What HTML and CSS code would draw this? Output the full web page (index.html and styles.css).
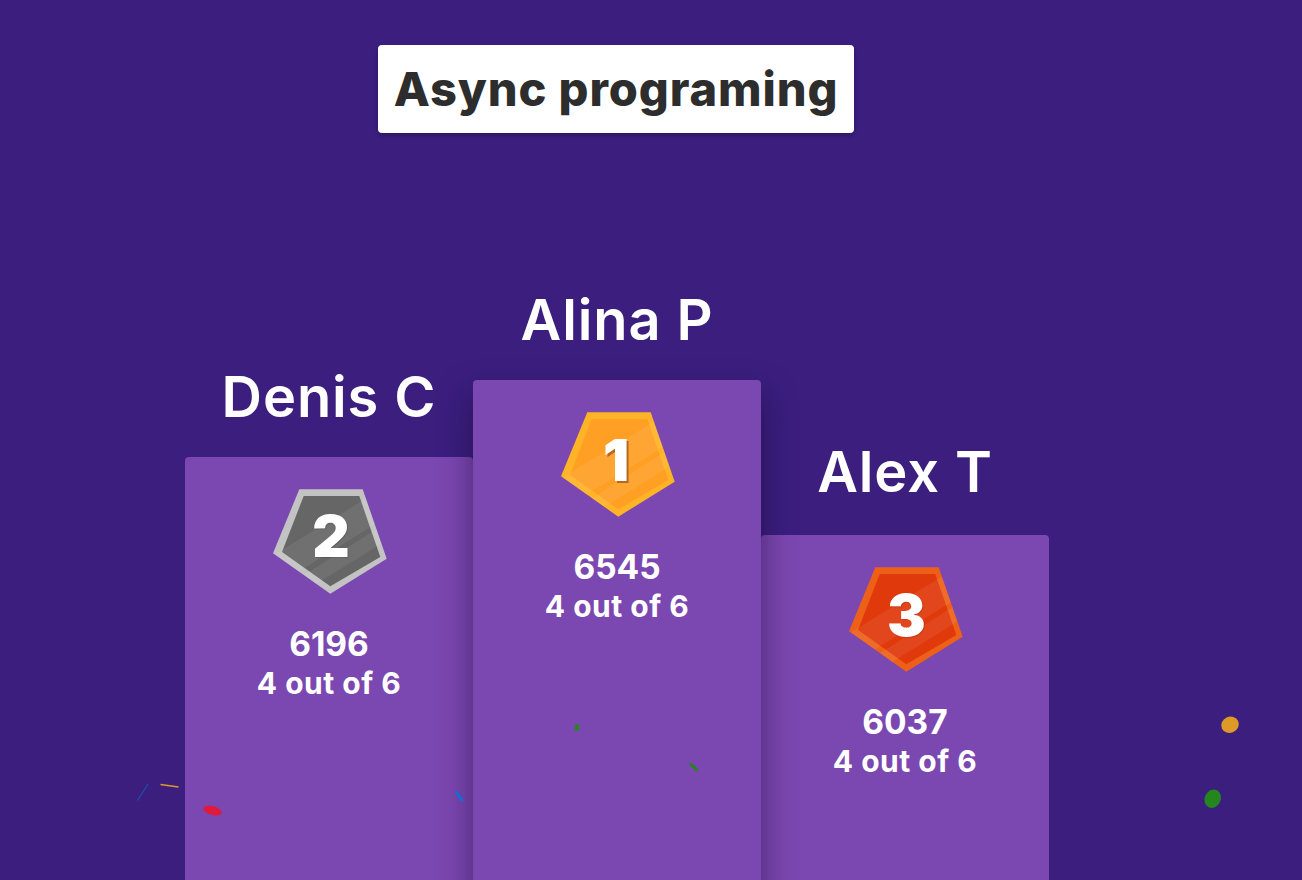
FILE: index.html
```html
<!DOCTYPE html>
<html lang="en">
<head>
<meta charset="utf-8">
<title>Async programing</title>
<link rel="stylesheet" href="styles.css">
</head>
<body>
<svg class="defs" width="0" height="0" aria-hidden="true">
  <defs>
    <clipPath id="shield"><polygon points="27.3,0.3 90.7,0.3 114.7,69.7 58.3,104.7 1,64.3"/></clipPath>
  </defs>
</svg>
<main class="page">
  <header class="title-row"><h1 class="title">Async programing</h1></header>
  <section class="podium">
    <article class="col col-second">
      <h2 class="name">Denis C</h2>
      <div class="card">
        <svg class="badge badge-silver" viewBox="0 0 116 106" width="116" height="106" role="img" aria-label="Place 2">
          <polygon class="rim" points="27.3,0.3 90.7,0.3 114.7,69.7 58.3,104.7 1,64.3"/>
          <polygon class="fill" points="31.7,7 87.3,7 108.3,68 58.3,97.3 10,63"/>
          <g clip-path="url(#shield)">
            <polygon class="sheen" points="0,67 88.3,13 116,-4 116,27 97.3,38.7 34,78 16,90"/>
            <polygon class="sheen" points="25,90 38.3,82.3 100,43 116,33 116,49 104,58 49,92 40,98"/>
          </g>
          <text class="digit" x="59" y="68">2</text>
        </svg>
        <p class="score">6196</p>
        <p class="result">4 out of 6</p>
      </div>
    </article>
    <article class="col col-first">
      <h2 class="name">Alina P</h2>
      <div class="card">
        <svg class="badge badge-gold" viewBox="0 0 116 106" width="116" height="106" role="img" aria-label="Place 1">
          <polygon class="rim" points="27.3,0.3 90.7,0.3 114.7,69.7 58.3,104.7 1,64.3"/>
          <polygon class="fill" points="31.7,7 87.3,7 108.3,68 58.3,97.3 10,63"/>
          <g clip-path="url(#shield)">
            <polygon class="sheen" points="0,67 88.3,13 116,-4 116,27 97.3,38.7 34,78 16,90"/>
            <polygon class="sheen" points="25,90 38.3,82.3 100,43 116,33 116,49 104,58 49,92 40,98"/>
          </g>
          <text class="digit digit-shadow" x="56" y="69">1</text>
        </svg>
        <p class="score">6545</p>
        <p class="result">4 out of 6</p>
      </div>
    </article>
    <article class="col col-third">
      <h2 class="name name-low">Alex T</h2>
      <div class="card">
        <svg class="badge badge-bronze" viewBox="0 0 116 106" width="116" height="106" role="img" aria-label="Place 3">
          <polygon class="rim" points="27.3,0.3 90.7,0.3 114.7,69.7 58.3,104.7 1,64.3"/>
          <polygon class="fill" points="31.7,7 87.3,7 108.3,68 58.3,97.3 10,63"/>
          <g clip-path="url(#shield)">
            <polygon class="sheen" points="0,67 88.3,13 116,-4 116,27 97.3,38.7 34,78 16,90"/>
            <polygon class="sheen" points="25,90 38.3,82.3 100,43 116,33 116,49 104,58 49,92 40,98"/>
          </g>
          <text class="digit" x="58.5" y="69">3</text>
        </svg>
        <p class="score">6037</p>
        <p class="result">4 out of 6</p>
      </div>
    </article>
  </section>
</main>
<svg class="confetti" viewBox="0 0 1302 880" width="1302" height="880" aria-hidden="true">
  <line class="c-blue c-thin" x1="148" y1="784" x2="137.5" y2="800.5"/>
  <line class="c-orange c-thin" x1="160.5" y1="784.5" x2="178.5" y2="787"/>
  <ellipse class="c-red-fill" cx="212.5" cy="810.5" rx="9.5" ry="4.5" transform="rotate(15 212.5 810.5)"/>
  <line class="c-bluebright c-thick" x1="456" y1="791.5" x2="462.5" y2="801"/>
  <rect class="c-green-fill" x="574.8" y="724.5" width="4.4" height="6"/>
  <line class="c-green c-thick" x1="690" y1="763.5" x2="697.5" y2="770.5"/>
  <ellipse class="c-orange-fill" cx="1230" cy="724.7" rx="9" ry="8" transform="rotate(-25 1230 724.7)"/>
  <ellipse class="c-green-fill" cx="1212.7" cy="798.7" rx="8" ry="9.5" transform="rotate(25 1212.7 798.7)"/>
</svg>
</body>
</html>
```
FILE: styles.css
```css
* { box-sizing: border-box; }
html, body {
  margin: 0;
  height: 880px;
  overflow: hidden;
  background: #3b1e7e;
}
body {
  position: relative;
  font-family: Inter, "Liberation Sans", sans-serif;
  color: #fff;
}
.defs { display: block; height: 0; }
.page {
  width: 864px;
  margin-left: 185px;
  padding-top: 45px;
}
.title-row {
  display: flex;
  justify-content: center;
  padding-right: 2px;
}
.title {
  margin: 0;
  padding: 16px;
  height: 88px;
  background: #fff;
  color: #2d2d2d;
  font-size: 47px;
  line-height: 56px;
  font-weight: 800;
  letter-spacing: 0.9px;
  white-space: nowrap;
  border-radius: 4px;
  box-shadow: 0 2px 4px rgba(0, 0, 0, 0.25);
}
.podium {
  display: flex;
  align-items: flex-start;
  margin-top: 150px;
}
.col {
  flex: 0 0 288px;
  display: flex;
  flex-direction: column;
}
.col-first { margin-top: 0; position: relative; z-index: 2; }
.col-second { margin-top: 77px; }
.col-third { margin-top: 155px; }
.name {
  margin: 0;
  height: 97px;
  padding-top: 3px;
  text-align: center;
  font-size: 56px;
  line-height: 68px;
  font-weight: 600;
  letter-spacing: 0.9px;
  white-space: nowrap;
}
.name-low { padding-top: 0; }
.card {
  height: 560px;
  padding-top: 32px;
  background: #7b47b0;
  border-radius: 4px 4px 0 0;
  text-align: center;
}
.col-first .card { box-shadow: 0 16px 32px rgba(20, 8, 50, 0.5); }
.badge {
  display: block;
  margin: 0 85px 0 87px;
  overflow: visible;
}
.sheen { fill: #fff; opacity: 0.07; }
.badge-gold .rim { fill: #ffb326; }
.badge-gold .fill { fill: #ff9f24; }
.badge-silver .rim { fill: #c3c3c3; }
.badge-silver .fill { fill: #666; }
.badge-bronze .rim { fill: #ee6018; }
.badge-bronze .fill { fill: #e0390c; }
.digit {
  fill: #fff;
  font-family: Inter, "Liberation Sans", sans-serif;
  font-size: 58px;
  font-weight: 900;
  text-anchor: middle;
  filter: drop-shadow(1px 1px 0 rgba(0, 0, 0, 0.12));
}
.digit-shadow {
  filter: drop-shadow(2px 2px 0 rgba(150, 80, 20, 0.7));
}
.score {
  margin: 29px 0 0;
  font-size: 33.5px;
  line-height: 41px;
  font-weight: 700;
}
.result {
  margin: 0;
  font-size: 30px;
  line-height: 36px;
  font-weight: 700;
  letter-spacing: 0.5px;
  white-space: nowrap;
}
.confetti {
  position: absolute;
  left: 0;
  top: 0;
  z-index: 5;
  pointer-events: none;
}
.c-thin { stroke-width: 1.3; }
.c-thick { stroke-width: 3; }
.c-blue { stroke: #1d4fa8; }
.c-bluebright { stroke: #0f6fd8; }
.c-orange { stroke: #dd9a26; }
.c-green { stroke: #24861f; }
.c-red-fill { fill: #e01a3c; }
.c-green-fill { fill: #24861f; }
.c-orange-fill { fill: #dd9a26; }
```
